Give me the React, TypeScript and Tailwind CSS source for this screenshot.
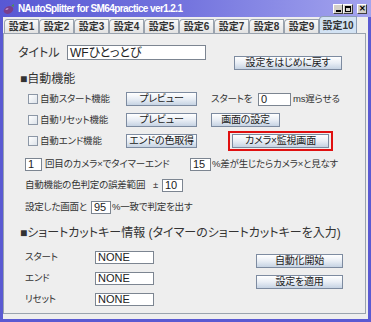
import React from 'react';

const jp = "font-['Liberation_Sans','Noto_Sans_CJK_JP',sans-serif] [font-feature-settings:'palt']";

function Btn({ label, w, className = '' }: { label: string; w: string; className?: string }) {
  return (
    <div
      className={`${w} h-[14px] shrink-0 flex items-center justify-center whitespace-nowrap border border-[#7d8ba0] bg-gradient-to-b from-[#ffffff] via-[#e9eef5] to-[#c6d3e3] text-[10px] leading-none text-[#222] ${className}`}
    >
      {label}
    </div>
  );
}

function Field({ value, w, h = 'h-[13px]', big }: { value: string; w: string; h?: string; big?: boolean }) {
  return (
    <div className={`${w} ${h} shrink-0 flex items-center border border-[#7c8591] bg-white pl-[2px] ${big ? 'text-[12px]' : 'text-[11px]'} leading-none tracking-normal text-[#222] whitespace-nowrap`}>
      {value}
    </div>
  );
}

function Check() {
  return <div className="w-[10px] h-[10px] shrink-0 border border-[#8c97a6] bg-gradient-to-br from-[#ffffff] to-[#dde3ea]" />;
}

function Tab({ label, active }: { label: string; active?: boolean }) {
  if (active) {
    return (
      <div className="w-[38px] h-[17px] shrink-0 flex items-center justify-center rounded-tl-[4px] border border-b-0 border-[#8c9db4] bg-[#d2e2f3] text-[10px] font-semibold text-[#333] whitespace-nowrap">
        {label}
      </div>
    );
  }
  return (
    <div className="w-[35px] h-[14px] mt-[2px] shrink-0 flex items-center justify-center rounded-tl-[4px] border border-b-0 border-[#9aa3ae] bg-gradient-to-b from-[#fafafa] to-[#e2e2e2] text-[10px] font-semibold text-[#333] whitespace-nowrap">
      {label}
    </div>
  );
}

function WinBtn({ children }: { children: React.ReactNode }) {
  return (
    <div className="w-[10px] h-[10px] flex items-center justify-center border border-t-white border-l-white border-r-[#404040] border-b-[#404040] bg-[#d4d0c8] text-[8px] font-bold leading-none text-black">
      {children}
    </div>
  );
}

export default function App() {
  return (
    <div className={`w-[371px] h-[322px] flex flex-col bg-[#5a5ad2] overflow-hidden ${jp}`}>
      {/* title bar */}
      <div className="h-[17px] shrink-0 flex items-center bg-gradient-to-r from-[#5858d4] via-[#7474de] to-[#a4a4ee] pl-[3px] pr-[4px]">
        <svg width="12" height="12" viewBox="0 0 12 12" className="shrink-0">
          <ellipse cx="5.5" cy="7" rx="5" ry="3.6" fill="#7a3f8c" transform="rotate(-25 5.5 7)" />
          <ellipse cx="4" cy="6" rx="1.6" ry="0.9" fill="#b98bc8" transform="rotate(-25 4 6)" />
          <path d="M8.5 2.5 L11 1 L10.5 4 Z" fill="#4d9a3a" />
        </svg>
        <span className="ml-[3px] text-[10px] font-bold tracking-[-0.6px] text-white whitespace-nowrap">NAutoSplitter for SM64practice ver1.2.1</span>
        <div className="ml-auto flex items-center">
          <WinBtn>
            <span className="mt-[5px] block w-[5px] h-[2px] bg-black" />
          </WinBtn>
          <WinBtn>
            <span className="block w-[6px] h-[6px] border border-black border-t-2" />
          </WinBtn>
          <div className="w-[4px]" />
          <WinBtn>✕</WinBtn>
        </div>
      </div>

      {/* body */}
      <div className="flex-1 mx-[3px] mb-[3px] flex flex-col bg-[#eeeeee]">
        <div className="h-[16px] shrink-0 flex items-end pl-[1px]">
          {['設定1', '設定2', '設定3', '設定4', '設定5', '設定6', '設定7', '設定8', '設定9'].map(t => (
            <Tab key={t} label={t} />
          ))}
          <Tab label="設定10" active />
        </div>

        <div className="flex-1 mr-[2px] mb-[5px] border border-[#9aa3ae] flex flex-col text-[9.5px] tracking-[-0.2px] text-[#333] whitespace-nowrap">
          {/* title */}
          <div className="mt-[11px] h-[15px] flex items-center">
            <span className="ml-[14px] w-[49px] text-[12px] tracking-normal">タイトル</span>
            <Field value="WFひとっとび" w="w-[139px]" h="h-[15px]" big />
          </div>
          <div className="-mt-[4px] flex">
            <Btn label="設定をはじめに戻す" w="w-[108px]" className="ml-[230px]" />
          </div>

          <div className="mt-[1px] h-[16px] flex items-center ml-[16px] text-[12px] tracking-normal">■自動機能</div>

          {/* auto rows */}
          <div className="mt-[5px] h-[14px] flex items-center">
            <div className="ml-[24px]"><Check /></div>
            <span className="ml-[2px] w-[86px]">自動スタート機能</span>
            <Btn label="プレビュー" w="w-[71px]" />
            <span className="ml-[14px] w-[47px]">スタートを</span>
            <Field value="0" w="w-[33px]" />
            <span className="ml-[2px]">ms遅らせる</span>
          </div>
          <div className="mt-[7px] h-[14px] flex items-center">
            <div className="ml-[24px]"><Check /></div>
            <span className="ml-[2px] w-[86px]">自動リセット機能</span>
            <Btn label="プレビュー" w="w-[71px]" />
            <Btn label="画面の設定" w="w-[69px]" className="ml-[14px]" />
          </div>
          <div className="mt-[7px] h-[14px] flex items-center">
            <div className="ml-[24px]"><Check /></div>
            <span className="ml-[2px] w-[86px]">自動エンド機能</span>
            <Btn label="エンドの色取得" w="w-[71px]" />
            <div className="ml-[31px] w-[105px] h-[20px] -my-[3px] shrink-0 flex items-center justify-center border-2 border-[#e01010]">
              <Btn label="カメラ×監視画面" w="w-[97px]" />
            </div>
          </div>

          <div className="mt-[10px] h-[13px] flex items-center">
            <div className="ml-[21px]"><Field value="1" w="w-[17px]" /></div>
            <span className="ml-[3px] w-[145px]">回目のカメラ×でタイマーエンド</span>
            <Field value="15" w="w-[21px]" />
            <span className="ml-[1px]">%差が生じたらカメラ×と見なす</span>
          </div>
          <div className="mt-[8px] h-[13px] flex items-center">
            <span className="ml-[21px] w-[128px]">自動機能の色判定の誤差範囲</span>
            <span className="w-[9px]">±</span>
            <Field value="10" w="w-[21px]" />
          </div>
          <div className="mt-[9px] h-[13px] flex items-center">
            <span className="ml-[21px] w-[66px]">設定した画面と</span>
            <Field value="95" w="w-[20px]" />
            <span className="ml-[1px]">%一致で判定を出す</span>
          </div>

          <div className="mt-[11px] h-[16px] flex items-center ml-[16px] text-[12px] tracking-normal">■ショートカットキー情報 (タイマーのショートカットキーを入力)</div>

          {/* shortcut keys */}
          <div className="mt-[10px] flex">
            <div className="flex flex-col gap-[8px]">
              {['スタート', 'エンド', 'リセット'].map(l => (
                <div key={l} className="h-[13px] flex items-center">
                  <span className="ml-[21px] w-[70px]">{l}</span>
                  <Field value="NONE" w="w-[59px]" />
                </div>
              ))}
            </div>
            <div className="ml-[102px] mt-[3px] flex flex-col gap-[7px]">
              <Btn label="自動化開始" w="w-[87px]" />
              <Btn label="設定を適用" w="w-[87px]" />
            </div>
          </div>
        </div>
      </div>
    </div>
  );
}
